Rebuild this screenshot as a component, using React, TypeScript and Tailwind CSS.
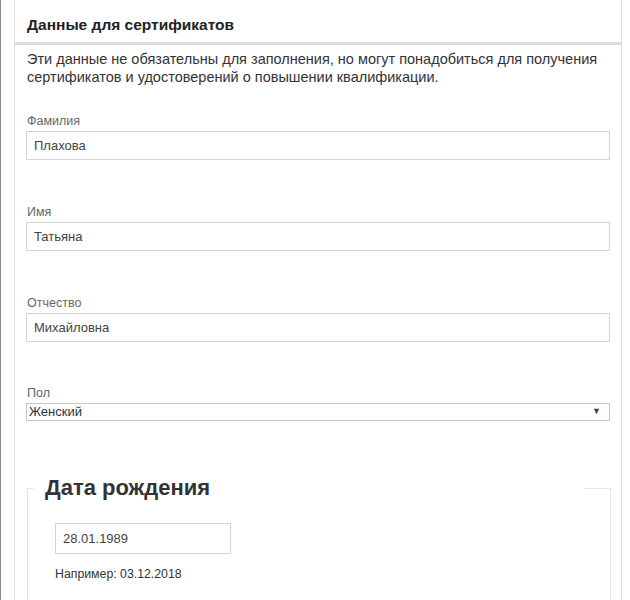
import React from "react";

const font = { fontFamily: '"Liberation Sans", Arial, sans-serif' };

function Field({ label, value, mt }: { label: string; value: string; mt: string }) {
  return (
    <div className={`${mt} px-[11px]`}>
      <div className="text-[12.5px] leading-[16px] text-[#666] pl-[1px]">{label}</div>
      <div className="mt-[2px] h-[29px] border border-[#d4d4d4] flex items-center pl-[7px] text-[13px] text-[#444]">
        {value}
      </div>
    </div>
  );
}

export default function App() {
  return (
    <div className="w-[630px] h-[600px] bg-white overflow-hidden flex" style={font}>
      <div className="w-[1px] h-full bg-[#8a8a8a]" />
      <div className="w-[13px]" />
      <div className="w-[608px] h-full border-l border-r border-[#e0e0e0] flex flex-col">
        <div className="pl-[12px] pt-[16px] pb-[8px] text-[15.5px] leading-[18px] font-bold text-[#222] border-b-[3px] border-[#dcdcdc]">
          Данные для сертификатов
        </div>
        <div className="pl-[12px] pr-[4px] pt-[5px] text-[14.5px] leading-[18px] text-[#333] whitespace-nowrap">
          Эти данные не обязательны для заполнения, но могут понадобиться для получения
          <br />
          сертификатов и удостоверений о повышении квалификации.
        </div>
        <Field label="Фамилия" value="Плахова" mt="mt-[27px]" />
        <Field label="Имя" value="Татьяна" mt="mt-[44px]" />
        <Field label="Отчество" value="Михайловна" mt="mt-[44px]" />
        <div className="mt-[43px] px-[11px]">
          <div className="text-[12.5px] leading-[16px] text-[#666] pl-[1px]">Пол</div>
          <div className="mt-[2px] h-[18px] border border-[#c8c8c8] flex items-center justify-between pl-[2px] pr-[8px] text-[13px] text-[#333]">
            <span>Женский</span>
            <span className="text-[9px] text-[#444]">▼</span>
          </div>
        </div>
        <fieldset className="mt-[54px] ml-[12px] mr-[10px] border border-[#e6e6e6] px-[6px] pb-[40px]">
          <legend className="w-[551px] bg-white pl-[11px] text-[22px] leading-[26px] font-bold text-[#333]">
            Дата рождения
          </legend>
          <div className="ml-[21px] mt-[22px]">
            <div className="w-[176px] h-[31px] border border-[#d4d4d4] flex items-center pl-[7px] text-[13px] text-[#444]">
              28.01.1989
            </div>
            <div className="mt-[13px] text-[12.3px] leading-[15px] text-[#333]">Например: 03.12.2018</div>
          </div>
        </fieldset>
      </div>
    </div>
  );
}
